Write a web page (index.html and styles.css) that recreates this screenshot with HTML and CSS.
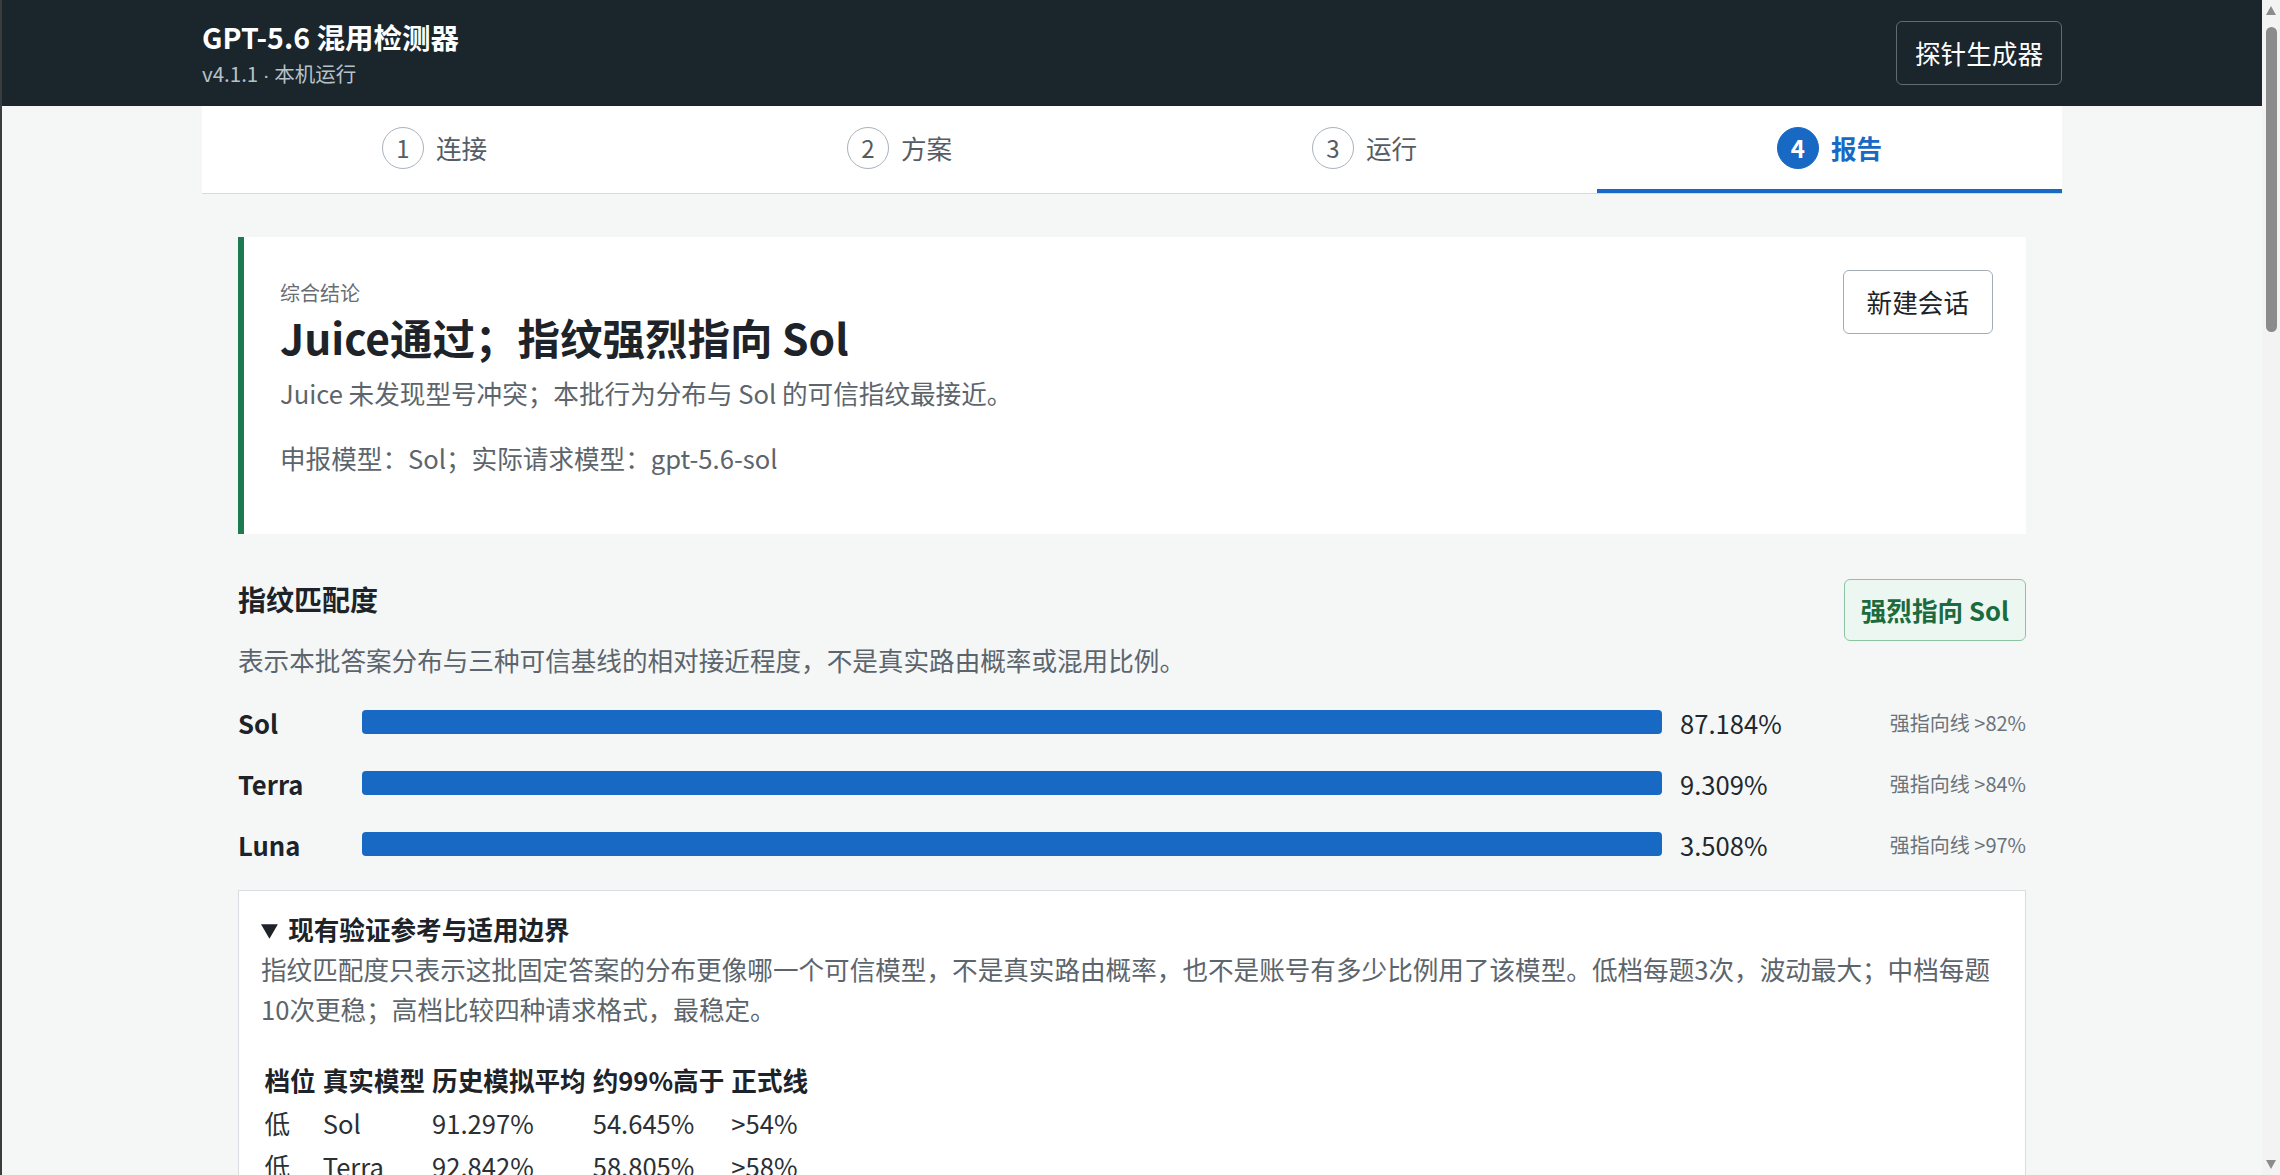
FILE: index.html
```html
<!DOCTYPE html>
<html lang="zh-CN">
<head>
  <meta charset="UTF-8" />
  <meta name="viewport" content="width=device-width, initial-scale=1.0"/>
  <title>GPT-5.6 混用检测器</title>
  <link rel="stylesheet" href="styles.css">
</head>
<body>
  <header class="topbar">
    <div class="wrap topbar-inner">
      <div class="brand">
        <div class="brand-title">GPT-5.6 混用检测器</div>
        <div class="brand-sub">v4.1.1 <span class="dot">·</span> 本机运行</div>
      </div>
      <button class="btn-dark">探针生成器</button>
    </div>
  </header>

  <nav class="wrap steps">
    <div class="step"><span class="step-num">1</span>连接</div>
    <div class="step"><span class="step-num">2</span>方案</div>
    <div class="step"><span class="step-num">3</span>运行</div>
    <div class="step active"><span class="step-num">4</span>报告</div>
  </nav>

  <main class="wrap report">
    <section class="verdict">
      <div class="verdict-body">
        <div class="eyebrow">综合结论</div>
        <h1>Juice通过；指纹强烈指向 Sol</h1>
        <p class="verdict-desc">Juice 未发现型号冲突；本批行为分布与 Sol 的可信指纹最接近。</p>
        <p class="verdict-meta">申报模型：Sol；实际请求模型：gpt-5.6-sol</p>
      </div>
      <button class="btn-light">新建会话</button>
    </section>

    <section class="match">
      <div class="match-head">
        <div>
          <h2>指纹匹配度</h2>
          <p class="muted">表示本批答案分布与三种可信基线的相对接近程度，不是真实路由概率或混用比例。</p>
        </div>
        <span class="badge">强烈指向 Sol</span>
      </div>

      <div class="bars">
        <div class="bar-row">
          <b>Sol</b>
          <div class="bar"></div>
          <span class="pct">87.184%</span>
          <span class="threshold">强指向线 &gt;82%</span>
        </div>
        <div class="bar-row">
          <b>Terra</b>
          <div class="bar"></div>
          <span class="pct">9.309%</span>
          <span class="threshold">强指向线 &gt;84%</span>
        </div>
        <div class="bar-row">
          <b>Luna</b>
          <div class="bar"></div>
          <span class="pct">3.508%</span>
          <span class="threshold">强指向线 &gt;97%</span>
        </div>
      </div>

      <details class="refs" open>
        <summary>现有验证参考与适用边界</summary>
        <p>指纹匹配度只表示这批固定答案的分布更像哪一个可信模型，不是真实路由概率，也不是账号有多少比例用了该模型。低档每题3次，波动最大；中档每题10次更稳；高档比较四种请求格式，最稳定。</p>
        <table>
          <tr><th>档位</th><th>真实模型</th><th>历史模拟平均</th><th>约99%高于</th><th>正式线</th></tr>
          <tr><td>低</td><td>Sol</td><td>91.297%</td><td>54.645%</td><td>&gt;54%</td></tr>
          <tr><td>低</td><td>Terra</td><td>92.842%</td><td>58.805%</td><td>&gt;58%</td></tr>
          <tr><td>低</td><td>Luna</td><td>98.614%</td><td>72.410%</td><td>&gt;72%</td></tr>
        </table>
      </details>
    </section>
  </main>

  <!-- window scrollbar as it shows in the capture -->
  <div class="scrollbar">
    <span class="arrow up"></span>
    <span class="thumb"></span>
    <span class="arrow down"></span>
  </div>
</body>
</html>
```

FILE: styles.css
```css
html {
  background: #f5f7f7;
}

body {
  margin: 0;
  padding-right: 18px;
  font-family: "Noto Sans CJK SC", "Noto Sans", sans-serif;
  font-size: 25.6px;
  background: #f5f7f7;
  color: #1d2328;
  border-left: 2px solid #3a3d40;
}

.wrap {
  max-width: 1860px;
  margin: 0 auto;
  box-sizing: border-box;
}

/* header */
.topbar {
  background: #1a252c;
  color: #fff;
}

.topbar-inner {
  height: 106px;
  display: flex;
  justify-content: space-between;
  align-items: center;
}

.brand-title {
  font-size: 28.5px;
  font-weight: bold;
  line-height: 38px;
}

.brand-sub {
  font-size: 20.5px;
  line-height: 28px;
  margin-top: 3px;
  color: #b7c1c8;
}

.brand-sub .dot {
  font-family: "Liberation Sans", sans-serif;
}

button {
  font-family: inherit;
  font-size: 25.6px;
  line-height: 36px;
  border-radius: 6px;
  cursor: pointer;
}

.btn-dark {
  background: transparent;
  color: #fff;
  border: 1px solid #5f6b74;
  padding: 13px 18px;
}

.btn-light {
  background: #fff;
  color: #1d2328;
  border: 1px solid #a3adb6;
  padding: 13px 23px;
  flex-shrink: 0;
}

/* steps */
.steps {
  display: grid;
  grid-template-columns: repeat(4, 1fr);
  background: #fff;
  border-bottom: 1px solid #d3dbe2;
}

.step {
  height: 87px;
  box-sizing: border-box;
  border-bottom: 4px solid transparent;
  display: flex;
  justify-content: center;
  align-items: center;
  gap: 12px;
  color: #555d64;
}

.step-num {
  width: 42px;
  height: 42px;
  box-sizing: border-box;
  border: 1px solid #a9b2ba;
  border-radius: 50%;
  display: flex;
  justify-content: center;
  align-items: center;
  font-size: 24px;
}

.step.active {
  border-bottom-color: #1769c4;
  color: #1769c4;
  font-weight: bold;
}

.step.active .step-num {
  background: #1769c4;
  border-color: #1769c4;
  color: #fff;
}

/* report */
.report {
  padding: 43px 36px 0;
}

.verdict {
  background: #fff;
  border-left: 6px solid #1e7a4f;
  padding: 33px 33px 58px 36px;
  display: flex;
  justify-content: space-between;
  align-items: flex-start;
}

.eyebrow {
  margin-top: 9px;
  font-size: 20px;
  line-height: 28px;
  color: #666d73;
}

.verdict h1 {
  margin: 3px 0 0;
  font-size: 42.5px;
  line-height: 54px;
}

.verdict p {
  margin: 0;
  line-height: 36px;
  color: #5c656c;
}

.verdict-desc {
  margin-top: 11px !important;
}

.verdict-meta {
  margin-top: 29px !important;
}

.match {
  margin-top: 45px;
}

.match-head {
  display: flex;
  justify-content: space-between;
  align-items: flex-start;
}

.match h2 {
  margin: 0;
  font-size: 28px;
  line-height: 40px;
}

.muted {
  margin: 23px 0 0;
  line-height: 36px;
  color: #5c656c;
}

.badge {
  background: #edf7f1;
  border: 1px solid #8cc3a3;
  border-radius: 6px;
  color: #1b6b3f;
  font-weight: bold;
  line-height: 36px;
  padding: 12px 16px;
}

.bars {
  margin-top: 24px;
  display: grid;
  gap: 21px;
}

.bar-row {
  display: grid;
  grid-template-columns: 106px 1fr 150px 178px;
  column-gap: 18px;
  align-items: center;
  height: 40px;
}

.bar {
  height: 24px;
  border-radius: 4px;
  background: #1769c4;
}

.pct {
  color: #22282d;
}

.threshold {
  text-align: right;
  font-size: 20px;
  color: #6b737a;
}

.refs {
  margin-top: 26px;
  background: #fff;
  border: 1px solid #d7dde1;
  padding: 21px 22px;
}

.refs summary {
  font-weight: bold;
  line-height: 34px;
  cursor: pointer;
}

.refs p {
  margin: 3px 0 0;
  line-height: 40px;
  color: #5c656c;
}

.refs table {
  margin-top: 29px;
  border-collapse: separate;
  border-spacing: 0 1px;
}

.refs th,
.refs td {
  padding: 3px 3.5px;
  text-align: left;
  line-height: 36px;
}

.refs td {
  color: #2a3035;
}

/* fake window scrollbar */
.scrollbar {
  position: fixed;
  top: 0;
  right: 0;
  bottom: 0;
  width: 18px;
  background: #f3f3f3;
}

.thumb {
  position: absolute;
  top: 27px;
  left: 4px;
  width: 11px;
  height: 305px;
  border-radius: 6px;
  background: #8b8b8b;
}

.arrow {
  position: absolute;
  left: 4px;
  width: 0;
  height: 0;
  border-left: 5px solid transparent;
  border-right: 5px solid transparent;
}

.arrow.up {
  top: 6px;
  border-bottom: 9px solid #8b8b8b;
}

.arrow.down {
  bottom: 6px;
  border-top: 9px solid #8b8b8b;
}
```
